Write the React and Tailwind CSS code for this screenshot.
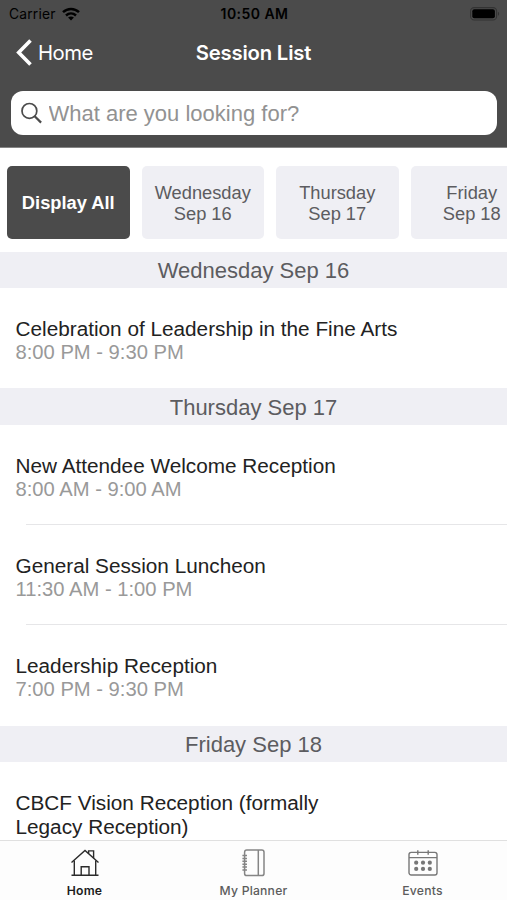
import React, { useState } from 'react';

const days = [
  { id: 'wed', weekday: 'Wednesday', date: 'Sep 16' },
  { id: 'thu', weekday: 'Thursday', date: 'Sep 17' },
  { id: 'fri', weekday: 'Friday', date: 'Sep 18' },
];

const sessions = {
  wed: [{ title: 'Celebration of Leadership in the Fine Arts', time: '8:00 PM - 9:30 PM' }],
  thu: [
    { title: 'New Attendee Welcome Reception', time: '8:00 AM - 9:00 AM' },
    { title: 'General Session Luncheon', time: '11:30 AM - 1:00 PM' },
    { title: 'Leadership Reception', time: '7:00 PM - 9:30 PM' },
  ],
  fri: [{ title: 'CBCF Vision Reception (formally\nLegacy Reception)', time: '' }],
};

function WifiIcon() {
  return (
    <svg width="18" height="14" viewBox="0 0 18 14" fill="none" stroke="#000" strokeWidth="2.5">
      <path d="M1 5.2C5.6.9 12.4.9 17 5.2" />
      <path d="M4 8.5c3-2.7 7-2.7 10 0" />
      <path d="M9 13.6 6.1 10.6c1.7-1.5 4.1-1.5 5.8 0z" fill="#000" stroke="none" />
    </svg>
  );
}

function BatteryIcon() {
  return (
    <svg width="30" height="14" viewBox="0 0 30 14">
      <rect x=".6" y=".6" width="26" height="12.4" rx="3.6" fill="none" stroke="#333" strokeWidth="1.1" />
      <rect x="2.3" y="2.3" width="22.6" height="9" rx="2" fill="#000" />
      <path d="M28 4.8c1.5.6 1.5 3.4 0 4z" fill="#333" />
    </svg>
  );
}

function HomeIcon() {
  return (
    <svg width="30" height="28" viewBox="0 0 30 28" fill="none" stroke="#2b2b2b" strokeWidth="1.4">
      <path d="M1.5 13.5 15 1.5l13.5 12" />
      <path d="M4.3 11.5v14.6M25.7 11.5v14.6M1.5 26.3h27" />
      <path d="M18.6 4.5V1.9h5v7.4" />
      <path d="M11.2 26v-8.2h7.8V26" />
    </svg>
  );
}

function PlannerIcon() {
  return (
    <svg width="24" height="28" viewBox="0 0 24 28" fill="none" stroke="#858585" strokeWidth="1.5">
      <rect x="2.6" y="1" width="19.4" height="25.6" rx="2.2" />
      <path d="M16.3 1v25.6" />
      <path d="M.4 6.5H5M.4 9.4H5M.4 12.3H5M.4 15.2H5M.4 18.1H5M.4 21H5" />
    </svg>
  );
}

function EventsIcon() {
  return (
    <svg width="30" height="26" viewBox="0 0 30 26" fill="none" stroke="#777" strokeWidth="1.4">
      <rect x="1" y="2.4" width="28" height="22.6" rx="2.2" />
      <path d="M1 7.6h28M9.8.2v4.6M20.2.2v4.6" />
      <g fill="#777" stroke="none">
        <circle cx="8.2" cy="12.7" r="2.1" />
        <circle cx="15" cy="12.7" r="2.1" />
        <circle cx="21.8" cy="12.7" r="2.1" />
        <circle cx="8.2" cy="18.9" r="2.1" />
        <circle cx="15" cy="18.9" r="2.1" />
        <circle cx="21.8" cy="18.9" r="2.1" />
      </g>
    </svg>
  );
}

function StatusBar() {
  return (
    <div className="grid grid-cols-3 items-center h-[27px] pl-[9px] pr-[7px] text-black">
      <div className="flex items-center gap-[6px]">
        <span className="pt-px text-[13.8px] tracking-[0.2px]">Carrier</span>
        <WifiIcon />
      </div>
      <div className="text-center text-[14px] font-semibold tracking-[0.45px] whitespace-nowrap">10:50 AM</div>
      <div className="flex justify-end">
        <BatteryIcon />
      </div>
    </div>
  );
}

function Session({ title, time, last }) {
  return (
    <div className="h-[100.2px] flex flex-col">
      <div className="flex-1 pl-[15.5px] pt-[29px] leading-[24px]">
        <div className="whitespace-pre-line text-[20.75px] text-[#222]">{title}</div>
        <div className="-mt-px text-[20.2px] text-[#999]">{time}</div>
      </div>
      {!last && <div className="ml-[26px] h-px shrink-0 bg-[#e6e6e8]" />}
    </div>
  );
}

export default function App() {
  const [selected, setSelected] = useState('all');
  const [tab, setTab] = useState('Home');

  const visible = days.filter((d) => selected === 'all' || d.id === selected);

  const tabs = [
    { name: 'Home', icon: <HomeIcon /> },
    { name: 'My Planner', icon: <PlannerIcon /> },
    { name: 'Events', icon: <EventsIcon /> },
  ];

  return (
    <div className="w-[507px] h-[900px] flex flex-col overflow-hidden bg-white font-['Liberation_Sans',Arial,sans-serif]">
      <header className="h-[148px] shrink-0 bg-[#4b4b4b] border-b border-[#858585] font-['Inter',sans-serif]">
        <StatusBar />
        <div className="grid grid-cols-[170px_1fr_170px] items-center h-[50px] text-white">
          <button className="flex items-center gap-[6px] pl-[16px] text-[20.3px] tracking-[-0.5px]">
            <svg width="16" height="27" viewBox="0 0 16 27" fill="none" stroke="#fff" strokeWidth="3.6">
              <path d="M14.5 1.5 2.7 13.5l11.8 12" />
            </svg>
            <span className="pt-[2px]">Home</span>
          </button>
          <h1 className="pt-[2px] text-center text-[20.3px] font-semibold tracking-[-0.2px]">Session List</h1>
        </div>
        <div className="mt-[14px] mx-[10.5px] h-[44px] flex items-center gap-[7px] pl-[10px] rounded-[12px] bg-white">
          <svg width="21" height="22" viewBox="0 0 21 22" fill="none" stroke="#4b4b4b" strokeWidth="1.7">
            <circle cx="8.4" cy="8.9" r="7.4" />
            <path d="m13.7 14.2 6.4 6.4" strokeWidth="2.2" />
          </svg>
          <input
            className="flex-1 min-w-0 outline-none text-[22px] placeholder:text-[#929292] font-['Liberation_Sans',Arial,sans-serif]"
            placeholder="What are you looking for?"
          />
        </div>
      </header>

      <div className="h-[103.6px] shrink-0 flex gap-[12px] pl-[7px] pt-[18px] overflow-hidden text-[18.3px] leading-[21px]">
        <button
          onClick={() => setSelected('all')}
          className="w-[122.5px] h-[73px] shrink-0 rounded-[5px] bg-[#4b4b4b] text-white font-bold"
        >
          Display All
        </button>
        {days.map((d) => (
          <button
            key={d.id}
            onClick={() => setSelected(d.id)}
            className="w-[122.5px] h-[73px] shrink-0 rounded-[5px] bg-[#efeff4] text-[#5c5c60]"
          >
            {d.weekday}
            <br />
            {d.date}
          </button>
        ))}
      </div>

      <main className="flex-1 min-h-0 overflow-hidden">
        {visible.map((d) => (
          <section key={d.id}>
            <h2 className="h-[36.6px] pt-[1px] flex items-center justify-center bg-[#efeff4] text-[22px] text-[#5c5c60]">
              {d.weekday} {d.date}
            </h2>
            {sessions[d.id].map((s, idx) => (
              <Session key={s.title} title={s.title} time={s.time} last={idx === sessions[d.id].length - 1} />
            ))}
          </section>
        ))}
      </main>

      <nav className="h-[60px] shrink-0 grid grid-cols-3 bg-[#fdfdfd] border-t border-[#e0e0e0] font-['Inter',sans-serif]">
        {tabs.map((t) => (
          <button key={t.name} onClick={() => setTab(t.name)} className="flex flex-col items-center pt-[8px]">
            <span className="h-[28px] flex items-center">{t.icon}</span>
            <span
              className={
                tab === t.name
                  ? 'mt-[6px] text-[12.2px] leading-[16px] tracking-[0.2px] font-semibold text-[#1c1c1c]'
                  : 'mt-[6px] text-[12.2px] leading-[16px] tracking-[0.2px] font-medium text-[#5c5c5c]'
              }
            >
              {t.name}
            </span>
          </button>
        ))}
      </nav>
    </div>
  );
}
